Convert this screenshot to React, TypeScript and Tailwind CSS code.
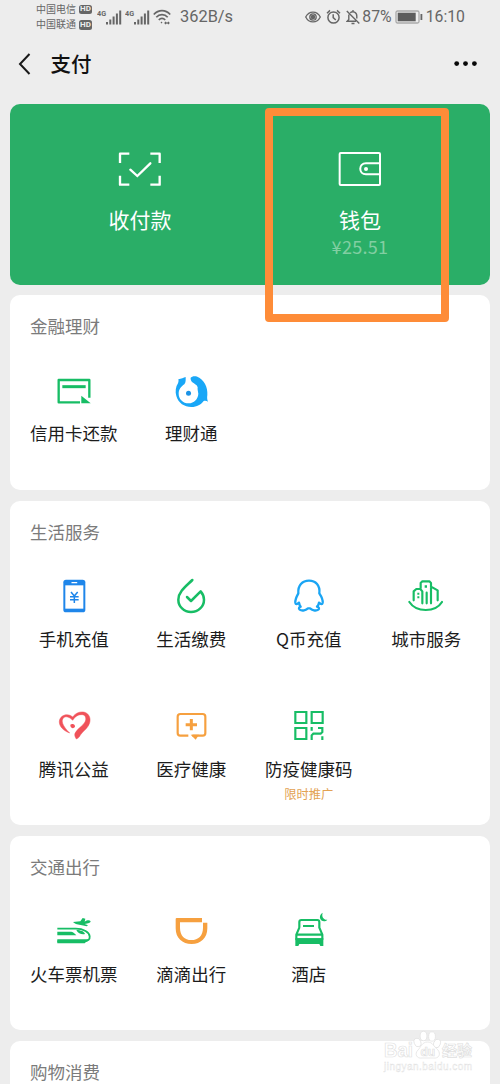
import type { ReactNode } from "react";

type Service = {
  label: string;
  icon: ReactNode;
  note?: string;
};

const GREEN = "#17bd65";
const BLUE = "#1aa5f4";
const ORANGE = "#f6a03f";

const Icon = ({ viewBox, children }: { viewBox: string; children: ReactNode }) => (
  <svg viewBox={viewBox} className="h-10 w-10 shrink-0" fill="none">
    {children}
  </svg>
);

const financeServices: Service[] = [
  {
    label: "信用卡还款",
    icon: (
      <Icon viewBox="131 33 120 120">
        <path d="M209 127H145V60H237V113" stroke={GREEN} strokeWidth="7" strokeLinejoin="round" />
        <path d="M156 80H226" stroke={GREEN} strokeWidth="9" />
        <path d="M213 107L241 130H213Z" fill={GREEN} />
      </Icon>
    ),
  },
  {
    label: "理财通",
    icon: (
      <Icon viewBox="484 33 120 120">
        <path
          d="M528 51C522 52 515 57 506 58C507 62 507 65 505 70C498 80 496 96 500 108C506 129 524 141 545 141C562 141 574 134 582 123C587 121 591 123 595 125C592 118 592 112 593 105C595 82 583 58 563 50C555 47 546 49 543 53C542 57 544 62 548 67C554 72 562 74 564 82C563 88 565 94 566 101C565 118 553 129 537 130C520 130 507 117 507 101C507 88 515 79 524 73C529 67 528 60 528 51Z"
          fill="#19a7f7"
        />
        <circle cx="536.5" cy="99.5" r="7.5" fill="#1b92e6" />
      </Icon>
    ),
  },
];

const lifeServices: Service[] = [
  {
    label: "手机充值",
    icon: (
      <Icon viewBox="101 51 120 120">
        <rect x="129" y="59" width="66" height="98" rx="8" fill="#1f86ea" />
        <rect x="135" y="76" width="54" height="70" fill="#fff" />
        <path d="M155 68H169" stroke="#fff" strokeWidth="4" strokeLinecap="round" />
        <path d="M152 96L162 108L172 96M162 108V129M149 110H175M149 119H175" stroke="#1f86ea" strokeWidth="4.5" />
      </Icon>
    ),
  },
  {
    label: "生活缴费",
    icon: (
      <Icon viewBox="454 51 120 120">
        <path
          d="M518 60C500 78 476 95 476 119C476 140 493 156 514 156C536 156 553 140 553 119C553 109 549 101 543 94L514 123L502 111"
          stroke={GREEN}
          strokeWidth="7.5"
          strokeLinecap="round"
          strokeLinejoin="round"
        />
      </Icon>
    ),
  },
  {
    label: "Q币充值",
    icon: (
      <Icon viewBox="116 51 120 120">
        <path
          d="M144 100C142 76 156 62 176 62C196 62 210 76 207 100C213 109 218 119 217 128C216 133 212 134 206 128C205 133 203 137 200 140C206 142 208 146 204 149C197 154 184 151 179 145H173C168 151 155 154 148 149C144 146 146 142 151 140C148 137 147 133 146 128C140 134 136 133 135 128C134 119 139 109 144 100Z"
          stroke={BLUE}
          strokeWidth="7"
          strokeLinejoin="round"
        />
      </Icon>
    ),
  },
  {
    label: "城市服务",
    icon: (
      <Icon viewBox="469 51 120 120">
        <path
          d="M479 126C500 158 557 158 577 126M492 121V94L500 87H512L518 94V130M513 85V69L518 64H539L544 69V130M544 80L564 91V121M531 98V130"
          stroke={GREEN}
          strokeWidth="6.5"
          strokeLinecap="round"
          strokeLinejoin="round"
        />
        <path d="M525 76H532V83H525ZM503 98H509V104H503ZM503 109H509V115H503Z" fill={GREEN} />
      </Icon>
    ),
  },
  {
    label: "腾讯公益",
    icon: (
      <Icon viewBox="101 51 120 120">
        <path
          d="M148 129C128 122 116 108 117 94C118 76 142 67 157 81C165 69 181 63 193 67C206 71 212 85 208 98C204 114 188 123 180 135C178 140 174 145 168 147C164 141 162 135 164 130C170 116 187 109 194 96C199 86 196 75 186 74C174 73 164 79 157 91C149 82 137 77 130 83C121 91 126 108 148 129Z"
          fill="#f0525a"
          stroke="#f0525a"
          strokeWidth="1.5"
        />
        <path d="M150 104C157 99 167 105 163 112C159 117 149 114 150 104Z" fill="#f0525a" />
      </Icon>
    ),
  },
  {
    label: "医疗健康",
    icon: (
      <Icon viewBox="454 51 120 120">
        <path d="M506 137H482Q474 137 474 129V80Q474 72 482 72H549Q557 72 557 80V129Q557 137 549 137H518" stroke={ORANGE} strokeWidth="6.5" />
        <path d="M513 134H538L528 149Z" fill={ORANGE} />
        <path d="M515 87V121M498 104H532" stroke={ORANGE} strokeWidth="9" />
      </Icon>
    ),
  },
  {
    label: "防疫健康码",
    note: "限时推广",
    icon: (
      <Icon viewBox="116 51 120 120">
        <path
          d="M135 66H168V99H135ZM184 66H217V99H184ZM135 114H168V147H135Z"
          stroke={GREEN}
          strokeWidth="6.5"
        />
        <path d="M184 111V122M216 111V126L211 131H189L184 136V150M203 114H219M216 139V150" stroke={GREEN} strokeWidth="6.5" />
      </Icon>
    ),
  },
];

const travelServices: Service[] = [
  {
    label: "火车票机票",
    icon: (
      <Icon viewBox="101 36 120 120">
        <path d="M111 86H166C190 86 207 97 208 109C209 118 203 124 192 124H111" stroke={GREEN} strokeWidth="5.5" />
        <path d="M111 118H205L193 130H111Z" fill={GREEN} />
        <path d="M111 95H153C160 97 164 101 168 106H111Z" fill={GREEN} />
        <path d="M168 90C182 90 192 95 194 102C185 104 173 101 168 90Z" fill={GREEN} />
        <path
          d="M158 66L180 64L187 54L195 56L193 65C201 60 208 60 211 64C211 69 204 71 193 72L203 76L199 79L181 75C170 74 162 71 158 66Z"
          fill={GREEN}
        />
      </Icon>
    ),
  },
  {
    label: "滴滴出行",
    icon: (
      <Icon viewBox="454 36 120 120">
        <path
          d="M471 54H547V67H481V83C481 107 495 120 515 120C536 120 550 107 550 83V68H563V85C563 115 543 132 516 132C488 132 468 115 468 85V57Q468 54 471 54Z"
          fill={ORANGE}
        />
      </Icon>
    ),
  },
  {
    label: "酒店",
    icon: (
      <Icon viewBox="116 36 120 120">
        <path d="M147 83V66Q147 60 153 60H201Q207 60 207 66V83L216 104V118H138V104L147 83M138 104H216M158 78H191" stroke={GREEN} strokeWidth="6.5" strokeLinejoin="round" />
        <path d="M135 115H219V138H210L207 132H147L144 138H135Z" fill={GREEN} />
        <path d="M217 38C209 43 207 50 210 57C214 65 225 66 231 59C220 60 213 50 217 38Z" fill={GREEN} />
      </Icon>
    ),
  },
];

const ServiceItem = ({ label, icon, note }: Service) => (
  <div className="flex flex-col items-center">
    {icon}
    <span className="mt-2 text-[17.5px] leading-7 whitespace-nowrap text-[#1c1c1c]">{label}</span>
    {note && <span className="mt-px text-[12.3px] leading-5 text-[#e3a252]">{note}</span>}
  </div>
);

const ServiceCard = ({
  title,
  services = [],
  className,
}: {
  title: string;
  services?: Service[];
  className: string;
}) => (
  <section className={`shrink-0 rounded-[10px] bg-white px-[5px] pt-[19px] ${className}`}>
    <h2 className="px-[15px] text-[17.5px] leading-6 text-[#7b7b7b]">{title}</h2>
    <div className="mt-[33px] grid auto-rows-[130px] grid-cols-4">
      {services.map((service) => (
        <ServiceItem key={service.label} {...service} />
      ))}
    </div>
  </section>
);

const Carrier = ({ name }: { name: string }) => (
  <div className="flex items-center gap-[3px]">
    <span className="text-[10px] leading-[15.5px]">{name}</span>
    <span className="flex h-[9.5px] w-[13px] items-center justify-center rounded-[2.5px] bg-[#666] font-['Roboto',sans-serif] text-[8px] leading-none font-bold text-[#ededed]">
      HD
    </span>
  </div>
);

const Signal = () => (
  <div className="flex w-7 items-start">
    <span className="w-[9px] origin-left scale-x-90 font-['Roboto',sans-serif] text-[8px] leading-[9px] font-bold">4G</span>
    <svg viewBox="0 0 16 15" className="mt-px h-[15px] w-4" stroke="currentColor" strokeWidth="2">
      <path d="M1 12V14.5M4.3 9.5V14.5M7.6 6.5V14.5M10.9 3.5V14.5M14.2 .5V14.5" />
    </svg>
  </div>
);

const StatusBar = () => (
  <div className="flex h-[34px] shrink-0 items-center justify-between pr-[35px] pl-9 font-['Roboto','Noto_Sans_CJK_SC',sans-serif] text-[#666]">
    <div className="flex items-center text-[16.4px]">
      <div className="mr-[5px]">
        <Carrier name="中国电信" />
        <Carrier name="中国联通" />
      </div>
      <Signal />
      <Signal />
      <svg viewBox="0 0 18 16" className="h-4 w-[18px]" fill="none" stroke="currentColor" strokeWidth="1.7">
        <path d="M.8 5.5C5.5 .3 12.5 .3 17.2 5.5M3.3 8.3C6.5 4.7 11.5 4.7 14.7 8.3M5.8 11C7.7 8.9 10.3 8.9 12.2 11" />
        <path d="M8 14.2L9 13M12 14H16M13 12.8L12 14L13 15.2M15 12.8L16 14L15 15.2" strokeWidth="1.2" />
      </svg>
      <span className="ml-[9px]">362B/s</span>
    </div>
    <div className="flex items-center text-[15.8px]">
      <svg viewBox="0 0 16 12" className="mr-[5px] h-3 w-4" fill="none" stroke="currentColor" strokeWidth="1.3">
        <path d="M.7 6C4 -.6 12 -.6 15.3 6C12 12.6 4 12.6 .7 6Z" />
        <circle cx="8" cy="6" r="3.2" />
        <circle cx="8" cy="6" r="1.7" fill="currentColor" />
      </svg>
      <svg viewBox="0 0 15 16" className="mr-[5px] h-4 w-[15px]" fill="none" stroke="currentColor" strokeWidth="1.5">
        <circle cx="7.5" cy="8.5" r="5.6" />
        <path d="M7.2 5.2V8.6L9.8 11M1 4.2L4 1.4M14 4.2L11 1.4" />
      </svg>
      <svg viewBox="0 0 14 16" className="mr-0.5 h-4 w-3.5" fill="none" stroke="currentColor" strokeWidth="1.4">
        <path d="M.8 2L13.3 14.5M4.2 3.8C6.8 1.8 10.8 3 10.8 7V9.5M2.8 5.5V10.5L1.2 12.3H10M7 2.8V1M5.5 14.5H8.5" />
      </svg>
      <span>87%</span>
      <svg viewBox="0 0 28 14" className="mr-[3px] ml-[3px] h-3.5 w-7">
        <rect x="1" y="1" width="23" height="12" rx="1.5" fill="#ededed" stroke="#aaa" strokeWidth="1.3" />
        <rect x="2.7" y="2.7" width="18" height="8.6" fill="#5d5d5d" />
        <rect x="25.5" y="4" width="1.8" height="6" fill="#666" />
      </svg>
      <span>16:10</span>
    </div>
  </div>
);

const Header = () => (
  <header className="flex h-[60px] shrink-0 items-center pr-[22px] pl-[18px]">
    <svg viewBox="0 0 13 22" className="h-[22px] w-[13px]" fill="none" stroke="#191919" strokeWidth="2">
      <path d="M11.5 1L2 11L11.5 21" />
    </svg>
    <h1 className="mb-0.5 ml-[19.5px] text-[20.5px] leading-7 font-medium text-[#111]">支付</h1>
    <svg viewBox="0 0 24 6" className="ml-auto h-1.5 w-6" fill="#080808">
      <circle cx="2.7" cy="2.6" r="2.4" />
      <circle cx="11.5" cy="2.6" r="2.4" />
      <circle cx="20.4" cy="2.6" r="2.4" />
    </svg>
  </header>
);

const PayCard = () => (
  <section className="relative grid h-[181px] shrink-0 grid-cols-2 rounded-[10px] bg-[#2aae67] px-5 pt-[35px] text-white">
    <div className="flex flex-col items-center">
      <svg viewBox="60 27 180 180" className="h-[60px] w-[60px]" fill="none" stroke="currentColor" strokeWidth="7">
        <path d="M90 99V71H118M181 71H209V99M209 137V164H181M118 164H90V137" strokeLinejoin="round" />
        <path d="M121 119L142 138L181 100" strokeLinecap="round" />
      </svg>
      <span className="mt-[5px] text-[21px] leading-[30px]">收付款</span>
    </div>
    <div className="flex flex-col items-center">
      <svg viewBox="210 117 180 180" className="h-[60px] w-[60px]" fill="none" stroke="currentColor" strokeWidth="6">
        <rect x="239" y="159" width="121" height="96" rx="3" />
        <path d="M360 190H318C295 190 295 223 318 223H360" />
        <circle cx="318" cy="207" r="6" fill="currentColor" stroke="none" />
      </svg>
      <span className="mt-[5px] text-[21px] leading-[30px]">钱包</span>
      <span className="text-[18px] leading-6 tracking-[0.3px] text-[#82cea2]">¥25.51</span>
    </div>
    {/* Highlight around the wallet entry */}
    <div className="absolute top-1 left-[255px] z-10 h-[214px] w-[184px] rounded-[4px] border-[8.5px] border-[#fe8c38]" />
  </section>
);

const Watermark = () => (
  <div className="absolute top-[1028px] left-[383px] w-[92px] font-['Liberation_Sans','Noto_Sans_CJK_SC',sans-serif]">
    <svg viewBox="0 0 92 48" className="h-12 w-[92px]" fill="#fff" stroke="#dfdfdf" strokeWidth="0.7">
      <ellipse cx="34.5" cy="14.5" rx="3.3" ry="4.4" transform="rotate(-20 34.5 14.5)" />
      <ellipse cx="40.5" cy="8" rx="3.4" ry="4.7" />
      <ellipse cx="49" cy="8.5" rx="3.4" ry="4.7" />
      <ellipse cx="54" cy="15.5" rx="3.3" ry="4.4" transform="rotate(20 54 15.5)" />
      <path d="M44.5 14C39 14 38 19 35 22C31 26 34 31 39 30H50C56 31 58 26 55 22C51 19 50 14 44.5 14Z" />
      <text x="1" y="29" fontSize="20" fontWeight="bold" textLength="29" lengthAdjust="spacingAndGlyphs">Bai</text>
      <text x="37.5" y="28" fontSize="12" fontWeight="bold">du</text>
      <text x="59" y="28" fontSize="15" fontWeight="bold">经验</text>
      <text x="1" y="42" fontSize="10" strokeWidth="0.4" textLength="88">jingyan.baidu.com</text>
    </svg>
  </div>
);

const App = () => {
  return (
    <div className="relative flex h-[1084px] w-[500px] flex-col overflow-hidden bg-[#ededed] font-['Noto_Sans_CJK_SC',sans-serif]">
      <StatusBar />
      <Header />
      <main className="flex flex-col px-2.5 pt-2.5">
        <PayCard />
        <ServiceCard title="金融理财" services={financeServices} className="mt-2.5 h-[195px]" />
        <ServiceCard title="生活服务" services={lifeServices} className="mt-[11px] h-[324px]" />
        <ServiceCard title="交通出行" services={travelServices} className="mt-[11px] h-[194px]" />
        <ServiceCard title="购物消费" className="mt-[11px] h-[195px]" />
      </main>
      <Watermark />
    </div>
  );
};

export default App;
